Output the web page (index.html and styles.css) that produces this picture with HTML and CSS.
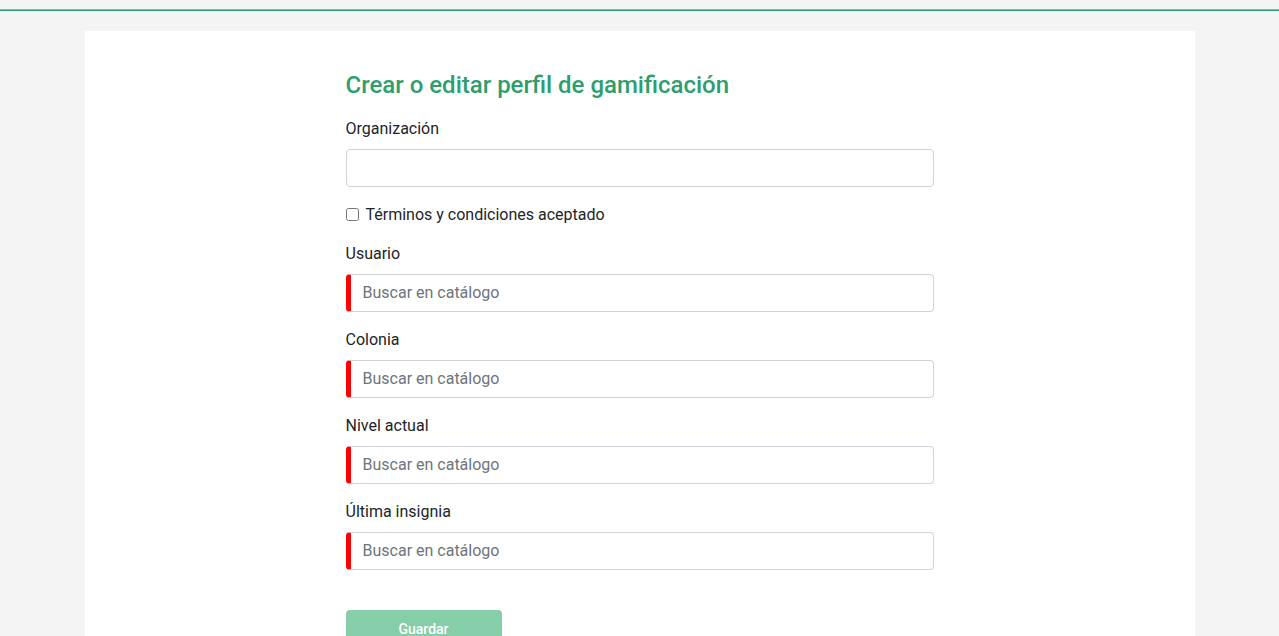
FILE: index.html
```html
<!DOCTYPE html>
<html lang="es">
<head>
<meta charset="utf-8">
<title>Perfil de gamificación</title>
<link rel="stylesheet" href="styles.css">
</head>
<body>
<div class="topbar"></div>
<main class="container">
  <div class="card">
    <form class="form">
      <h3 class="title">Crear o editar perfil de gamificación</h3>
      <div class="group">
        <label class="label">Organización</label>
        <input class="control" type="text">
      </div>
      <div class="check">
        <input type="checkbox" class="check-input" id="terms">
        <label for="terms" class="check-label">Términos y condiciones aceptado</label>
      </div>
      <div class="group">
        <label class="label">Usuario</label>
        <input class="control required" type="text" placeholder="Buscar en catálogo">
      </div>
      <div class="group">
        <label class="label">Colonia</label>
        <input class="control required" type="text" placeholder="Buscar en catálogo">
      </div>
      <div class="group">
        <label class="label">Nivel actual</label>
        <input class="control required" type="text" placeholder="Buscar en catálogo">
      </div>
      <div class="group">
        <label class="label">Última insignia</label>
        <input class="control required" type="text" placeholder="Buscar en catálogo">
      </div>
      <button type="button" class="btn" disabled>Guardar</button>
    </form>
  </div>
</main>
</body>
</html>
```
FILE: styles.css
```css
* { box-sizing: border-box; }
html, body { margin: 0; }
body {
  background: #f4f4f4;
  font-family: Roboto, "Liberation Sans", sans-serif;
  font-size: 16px;
  line-height: 1.5;
  color: #212529;
  overflow: hidden;
}
.topbar {
  height: 11px;
  border-bottom: 1px solid #2e9e6e;
  background: linear-gradient(to bottom, transparent 9px, #a8a8a8 9px);
}
.container {
  width: 1110px;
  margin: 20px auto 0;
}
.card {
  background: #fff;
  min-height: 700px;
  padding: 40px 0 40px;
}
.form {
  width: 588px;
  margin: 0 auto;
}
.title {
  margin: 0 0 17px;
  font-size: 24px;
  font-weight: 500;
  line-height: 1.2;
  color: #2e9e6e;
}
.group { margin-bottom: 16px; }
.label {
  display: block;
  margin-bottom: 8px;
}
.control {
  display: block;
  width: 100%;
  height: 38px;
  padding: 6px 12px;
  font-family: inherit;
  font-size: 16px;
  color: #495057;
  background: #fff;
  border: 1px solid #ced4da;
  border-radius: 4px;
  outline: none;
}
.control::placeholder { color: #6c757d; opacity: 1; }
.required { border-left: 5px solid #ff0000; }
.check {
  display: flex;
  align-items: center;
  margin: 0 0 15px;
  height: 24px;
}
.check-input {
  width: 13px;
  height: 13px;
  margin: 0 7px 0 0;
}
.btn {
  display: block;
  margin-top: 40px;
  width: 156px;
  height: 38px;
  border: 0;
  border-radius: 4px;
  background: #86cdaa;
  color: #fff;
  font-family: inherit;
  font-size: 14px;
  font-weight: 500;
}
```
